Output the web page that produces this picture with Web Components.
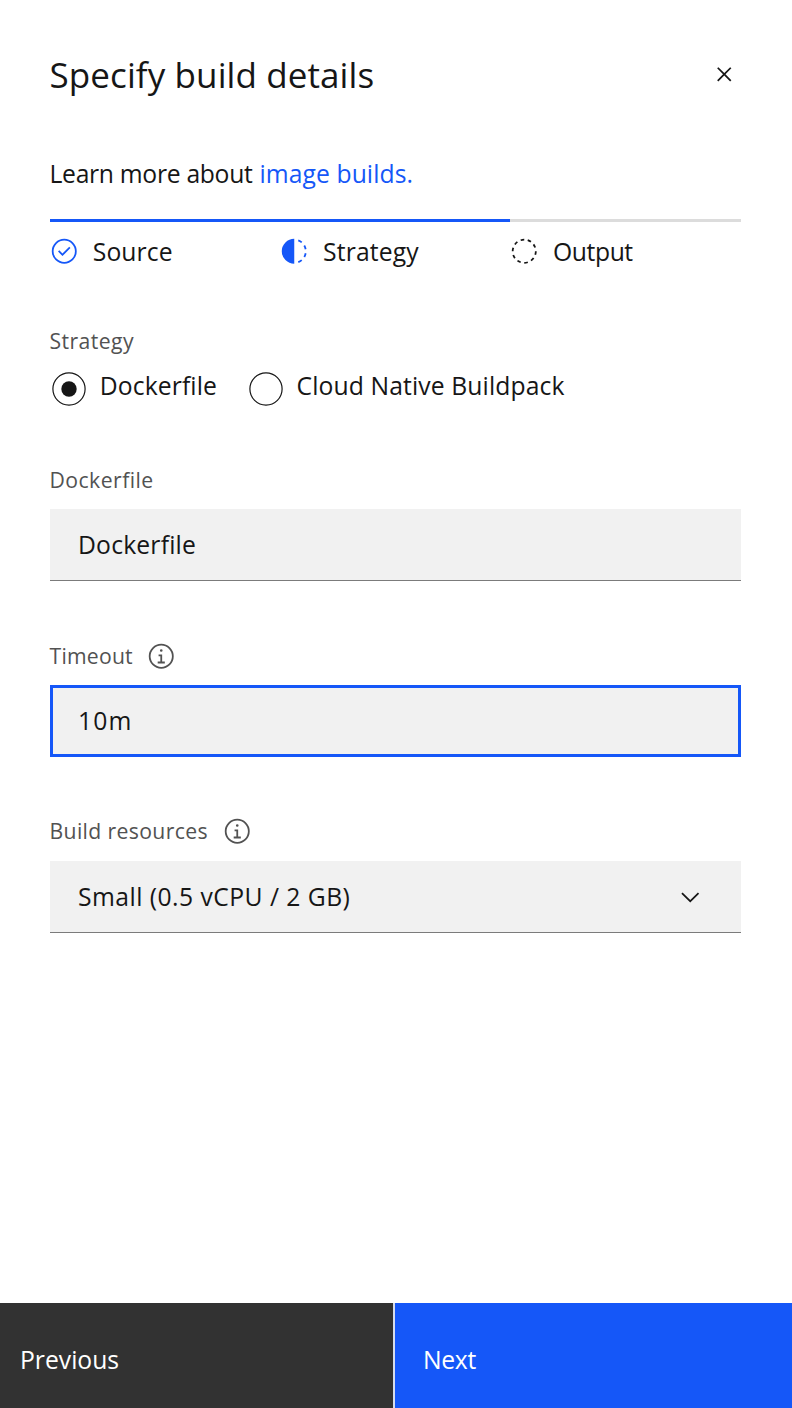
<!DOCTYPE html>
<html lang="en">
<head>
<meta charset="utf-8">
<title>Specify build details</title>
<style>
  html, body { margin: 0; background: #fff; }
  body { font: 24.7px/32px "Open Sans", "Noto Sans", sans-serif; color: #161616; font-variant-ligatures: none; }
</style>
</head>
<body>
<build-panel></build-panel>
<script>
const RING = 'M16,2A14,14,0,1,0,30,16,14,14,0,0,0,16,2Zm0,26A12,12,0,1,1,28,16,12,12,0,0,1,16,28Z';
const ICONS = {
  close: 'M24 9.4 22.6 8 16 14.6 9.4 8 8 9.4 14.6 16 8 22.6 9.4 24 16 17.4 22.6 24 24 22.6 17.4 16z',
  chevron: 'M16 22 6 12 7.4 10.6 16 19.2 24.6 10.6 26 12z',
  info: 'M17 22V14H13V16H15V22H12V24H20V22ZM16 8a1.5 1.5 0 1 0 1.5 1.5A1.5 1.5 0 0 0 16 8Z' + RING,
  complete: 'M14 21.414 9 16.413 10.413 15 14 18.586 21.585 11 23 12.415 14 21.414Z' + RING,
  current: 'M23.764 6.859l1.285-1.531A13.976 13.976 0 0 0 20.867 2.887l-.684 1.878A11.973 11.973 0 0 1 23.764 6.859ZM27.81 14l1.968-.413A13.889 13.889 0 0 0 28.14 9.046L26.409 10A12.52 12.52 0 0 1 27.81 14ZM20.184 27.235l.684 1.878a13.976 13.976 0 0 0 4.182-2.441l-1.285-1.531A11.973 11.973 0 0 1 20.184 27.235ZM26.409 22L28.14 23a14.14 14.14 0 0 0 1.638-4.587L27.81 18.066A12.152 12.152 0 0 1 26.409 22ZM16 30V2a14 14 0 0 0 0 28Z',
  pending: 'M7.7 4.7a14.7 14.7 0 0 0-3 3.1L6.3 9A13.26 13.26 0 0 1 8.9 6.3ZM4.6 12.3l-1.9-.6A12.51 12.51 0 0 0 2 16H4A11.48 11.48 0 0 1 4.6 12.3ZM2.7 20.4a14.4 14.4 0 0 0 2 3.9l1.6-1.2a12.89 12.89 0 0 1-1.7-3.3ZM7.8 27.3a14.4 14.4 0 0 0 3.9 2l.6-1.9A12.89 12.89 0 0 1 9 25.7ZM11.7 2.7l.6 1.9A11.48 11.48 0 0 1 16 4V2A12.51 12.51 0 0 0 11.7 2.7ZM24.2 27.3a15.18 15.18 0 0 0 3.1-3.1L25.7 23A11.53 11.53 0 0 1 23 25.7ZM27.4 19.7l1.9.6A15.47 15.47 0 0 0 30 16H28A11.48 11.48 0 0 1 27.4 19.7ZM29.2 11.6a14.4 14.4 0 0 0-2-3.9L25.6 8.9a12.89 12.89 0 0 1 1.7 3.3ZM24.1 4.6a14.4 14.4 0 0 0-3.9-2l-.6 1.9a12.89 12.89 0 0 1 3.3 1.7ZM20.3 29.3l-.6-1.9A11.48 11.48 0 0 1 16 28v2A21.42 21.42 0 0 0 20.3 29.3Z'
};

function define(name, render) {
  customElements.define(name, class extends HTMLElement {
    connectedCallback() {
      if (this.shadowRoot) return;
      const t = document.createElement('template');
      t.innerHTML = render(this);
      this.attachShadow({ mode: 'open' }).append(t.content.cloneNode(true));
    }
  });
}

define('ui-icon', el => `
  <style>:host{display:block;flex:none;width:28.5px;height:28.5px}svg{display:block;width:100%;height:100%;fill:currentColor}</style>
  <svg viewBox="0 0 32 32" aria-hidden="true"><path d="${ICONS[el.getAttribute('name')]}"/></svg>`);

define('progress-step', el => `
  <style>
    :host{display:block;border-top:3px solid #1557f8}
    :host([state=pending]){border-color:#dcdcdc}
    div{display:flex;align-items:flex-start;padding-top:14px}
    ui-icon{margin:1.2px 14.5px 0 .3px;color:#1557f8}
    :host([state=current]) ui-icon,:host([state=pending]) ui-icon{margin-left:.8px;margin-right:14.2px}
    :host([state=pending]) ui-icon{color:#161616}
  </style>
  <div><ui-icon name="${el.getAttribute('state')}"></ui-icon><slot></slot></div>`);

define('radio-option', () => `
  <style>
    :host{display:flex;align-items:flex-start}
    svg{flex:none;display:block;width:34px;height:34px;margin:1.5px 13.7px 0 0}
    circle{fill:none;stroke:#161616;stroke-width:1.2}
    .dot{display:none;fill:#161616;stroke:none}
    :host([checked]) .dot{display:block}
  </style>
  <svg viewBox="0 0 34 34"><circle cx="17" cy="17" r="16.1"/><circle class="dot" cx="17" cy="17" r="7.7"/></svg><slot></slot>`);

define('form-field', el => `
  <style>
    :host{display:block}
    .label{display:flex;height:24px;margin-top:var(--label-shift,0);margin-bottom:var(--label-gap,17px);font-size:21.2px;line-height:24px;color:#525252}
    .label ui-icon{margin:-2px 0 0 var(--info-gap,14px)}
    .box{box-sizing:border-box;height:72px;padding:0 36px 1px 28.5px;display:flex;align-items:center;justify-content:space-between;background:#f1f1f1;box-shadow:inset 0 -1px #7b7b7b}
    .box ui-icon{margin-top:1px}
    :host([focused]) .box{box-shadow:inset 0 0 0 3px #1557f8}
  </style>
  <div class="label"><slot name="label"></slot>${el.hasAttribute('info') ? '<ui-icon name="info"></ui-icon>' : ''}</div>
  <div class="box"><slot></slot>${el.hasAttribute('dropdown') ? '<ui-icon name="chevron"></ui-icon>' : ''}</div>`);

define('footer-button', () => `
  <style>
    :host{display:block;box-sizing:border-box;height:105px;padding:41px 0 0 20px;color:#fff;background:#323232}
    :host([primary]){padding-left:28px;background:#1557f8;border-left:2px solid #d5dcec}
  </style><slot></slot>`);

define('build-panel', () => `
  <style>
    :host{display:flex;flex-direction:column;height:1408px;overflow:hidden}
    main{flex:1;padding:51px 51.5px 0 49.5px}
    header{display:flex;justify-content:space-between;height:48px}
    h1{margin:0;font-size:35px;font-weight:400;line-height:48px;letter-spacing:.1px}
    header ui-icon{margin:9.2px 2px 0 0}
    p{display:flex;margin:59px 0 29px;height:32px}
    a{color:#1557f8;text-decoration:none}
    .steps{display:grid;grid-template-columns:230px 230px 231px}
    .caption{margin-top:61px;height:24px;font-size:21.2px;line-height:24px;letter-spacing:.41px;color:#525252}
    .radios{display:flex;margin-top:17px;height:36px}
    .fields{display:grid;row-gap:63px;margin-top:62px}
    footer{display:grid;grid-template-columns:393px 399px}
  </style>
  <main>
    <header><h1>Specify build details</h1><ui-icon name="close" role="button" aria-label="Close"></ui-icon></header>
    <p><span style="width:210px;letter-spacing:-.3px">Learn more about</span><a href="#" style="letter-spacing:.08px">image builds.</a></p>
    <section class="steps">
      <progress-step state="complete"><span style="letter-spacing:.08px">Source</span></progress-step>
      <progress-step state="current"><span style="letter-spacing:.16px">Strategy</span></progress-step>
      <progress-step state="pending"><span style="letter-spacing:-.4px">Output</span></progress-step>
    </section>
    <div class="caption">Strategy</div>
    <div class="radios">
      <radio-option checked style="width:194.3px;padding-left:2.5px"><span style="letter-spacing:.12px">Dockerfile</span></radio-option>
      <radio-option style="padding-left:2.5px"><span style="letter-spacing:.12px">Cloud Native Buildpack</span></radio-option>
    </div>
    <section class="fields">
      <form-field><span slot="label" style="letter-spacing:.45px">Dockerfile</span><span style="letter-spacing:.19px">Dockerfile</span></form-field>
      <form-field info focused style="--info-gap:14.5px"><span slot="label" style="letter-spacing:.22px">Timeout</span><span style="letter-spacing:1.1px">10m</span></form-field>
      <form-field info dropdown style="--label-shift:-1px;--label-gap:18px;--info-gap:14.8px"><span slot="label" style="letter-spacing:.36px">Build resources</span><span style="letter-spacing:.46px">Small (0.5 vCPU / 2 GB)</span></form-field>
    </section>
  </main>
  <footer><footer-button><span>Previous</span></footer-button><footer-button primary><span style="letter-spacing:-.29px">Next</span></footer-button></footer>`);
</script>
</body>
</html>
